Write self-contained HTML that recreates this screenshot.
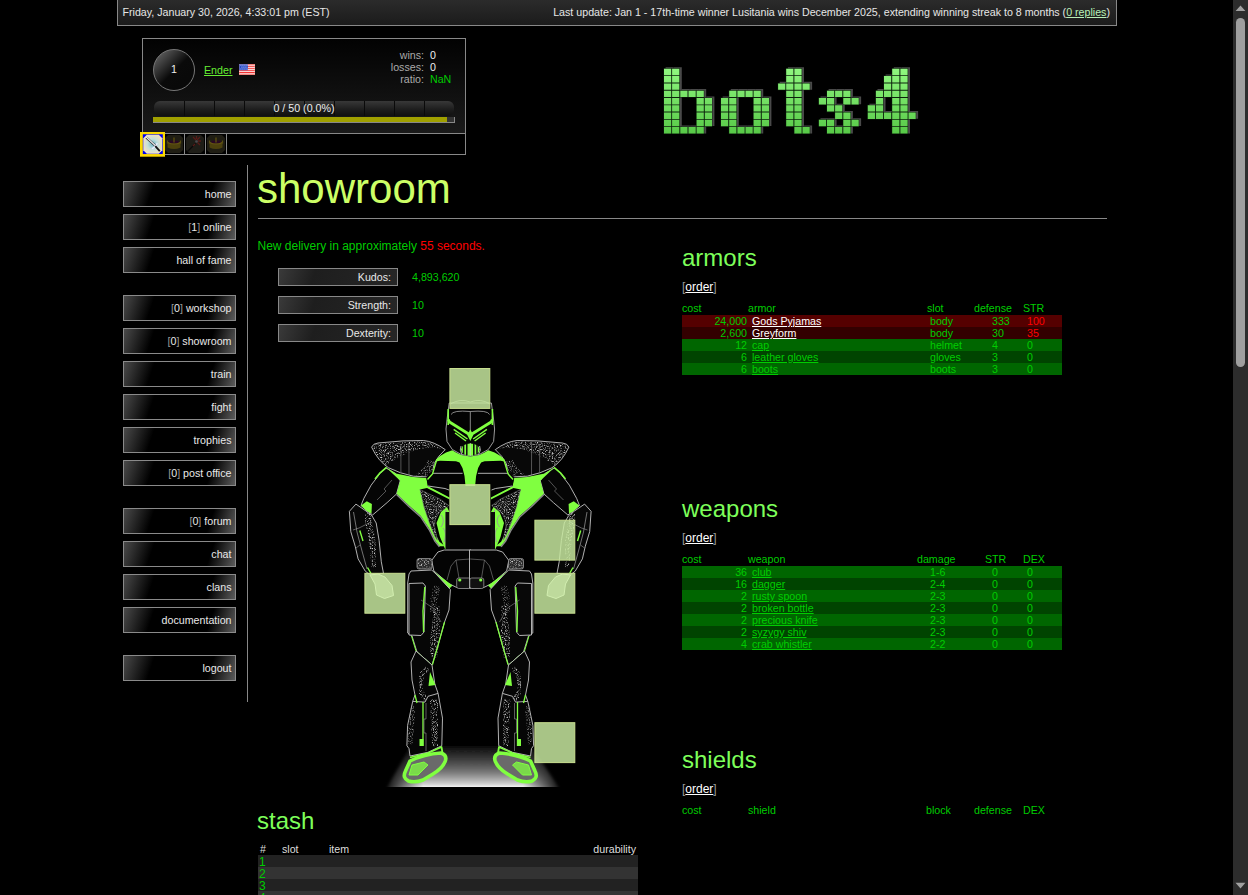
<!DOCTYPE html>
<html lang="en">
<head>
<meta charset="utf-8">
<title>bots4 - showroom</title>
<style>
html,body{margin:0;padding:0;background:#000;}
body{width:1248px;height:895px;overflow:hidden;position:relative;font-family:"Liberation Sans",sans-serif;font-size:12px;color:#ddd;}
a{color:inherit;}
.abs{position:absolute;}
/* top bar */
#topbar{position:absolute;left:117px;top:-1px;width:998px;height:25px;border:1px solid #888;background:linear-gradient(#2b2b2b,#1b1b1b);line-height:25px;font-size:8pt;color:#e6e6e6;}
#topbar .l{position:absolute;left:4.5px;top:0;}
#topbar .rt{position:absolute;right:6px;top:0;}
#topbar a{color:#b8f0b8;text-decoration:underline;}
/* player card */
#card{position:absolute;left:142px;top:38px;width:322px;height:115px;border:1px solid #888;background:#000;}
#card .top{position:absolute;left:0;top:0;width:322px;height:94px;background:linear-gradient(#020202,#1a1a1a);border-bottom:1px solid #888;}
#lvl{position:absolute;left:10px;top:10px;width:40px;height:40px;border:1px solid #777;border-radius:50%;background:linear-gradient(135deg,#707070 0%,#3a3a3a 28%,#0a0a0a 52%,#080808 100%);text-align:center;line-height:38px;font-size:8pt;color:#eee;}
#pname{position:absolute;left:61px;top:25px;font-size:8pt;color:#6e3;text-decoration:underline;}
#flag{position:absolute;left:96px;top:25px;width:16px;height:11px;}
.stat{position:absolute;font-size:8pt;line-height:12px;color:#aaa;}
#xp{position:absolute;left:11px;top:62px;width:300px;height:15px;border-radius:6px;background:linear-gradient(#383838,#1c1c1c 60%,#101010);overflow:hidden;}
#xp i{position:absolute;top:0;width:1px;height:15px;background:#0a0a0a;}
#xp span{position:absolute;left:0;top:0;width:300px;text-align:center;font-size:8pt;line-height:15px;color:#eee;}
#hp{position:absolute;left:10px;top:78px;width:301px;height:5px;background:#333;border-right:1px solid #888;border-bottom:1px solid #888;}
#hp b{display:block;width:294px;height:5px;background:#a0a000;}
.ic{position:absolute;top:95px;width:20px;height:20px;border-right:1px solid #888;background:#000;}
.ic svg{display:block;}
.ic.dim svg{opacity:.55;}
/* menu */
.mb{position:absolute;left:123px;width:107.5px;height:24px;border:1px solid #8a8a8a;padding-right:3.5px;text-align:right;font-size:8pt;line-height:24px;color:#e8e8e8;background:linear-gradient(108deg,#4a4a4a 0%,#000 26%,#000 76%,#5c5c5c 100%);}
.mb s{text-decoration:none;color:#999;}
#vline{position:absolute;left:247px;top:165px;width:1px;height:537px;background:#888;}
h1{position:absolute;left:257px;top:165px;margin:0;font-size:42px;line-height:48px;font-weight:normal;color:#ccff66;}
#hr{position:absolute;left:258px;top:218px;width:849px;height:1px;background:#888;}
h2{position:absolute;margin:0;font-size:24px;line-height:28px;font-weight:normal;color:#7dff5a;}
.g{color:#0c0;}
.r{color:#f00;}
.sb{position:absolute;left:278px;width:112px;height:16px;border:1px solid #888;padding-right:6px;text-align:right;font-size:8pt;line-height:16px;color:#e8e8e8;background:linear-gradient(108deg,#3a3a3a 0%,#1e1e1e 30%,#262626 100%);}
.sv{position:absolute;left:412px;font-size:8pt;line-height:18px;color:#0c0;}
/* tables */
.tb{position:absolute;left:682px;width:380px;font-size:8pt;line-height:12px;color:#0c0;}
.tr{position:relative;height:12px;width:380px;}
.tr span,.tr a{position:absolute;top:0;white-space:nowrap;}
.c1{right:315px;}
.hd span{top:-1px !important;}
.ord{position:absolute;left:682px;font-size:12px;line-height:14px;color:#999;}
.ord a{color:#fff;}
#scroll{position:absolute;left:1233px;top:0;width:15px;height:895px;background:#2c2c2c;}
#scroll .th{position:absolute;left:3px;top:18px;width:9px;height:349px;border-radius:4.5px;background:#9f9f9f;}
#scroll svg{position:absolute;left:0;top:0;}
</style>
</head>
<body>
<div id="topbar"><span class="l">Friday, January 30, 2026, 4:33:01 pm (EST)</span><span class="rt">Last update: Jan 1 - 17th-time winner Lusitania wins December 2025, extending winning streak to 8 months (<a>0 replies</a>)</span></div>

<!--LOGO-->
<svg id="logo" class="abs" style="left:655px;top:60px" width="275" height="85" viewBox="655 60 275 85" role="img" aria-label="bots4">
<defs><linearGradient id="lg" gradientUnits="userSpaceOnUse" x1="0" y1="68" x2="0" y2="135"><stop offset="0" stop-color="#90f780"/><stop offset="1" stop-color="#56c846"/></linearGradient><filter id="lb" x="-5%" y="-10%" width="110%" height="120%"><feGaussianBlur stdDeviation="0.5"/></filter></defs>
<path d="M665.6 67.2h8.0v7.9h-8.0zM673.8 67.2h8.0v7.9h-8.0zM665.6 74.5h8.0v7.9h-8.0zM673.8 74.5h8.0v7.9h-8.0zM665.6 81.8h8.0v7.9h-8.0zM673.8 81.8h8.0v7.9h-8.0zM665.6 89.1h8.0v7.9h-8.0zM673.8 89.1h8.0v7.9h-8.0zM681.9 89.1h8.0v7.9h-8.0zM690.1 89.1h8.0v7.9h-8.0zM698.2 89.1h8.0v7.9h-8.0zM665.6 96.4h8.0v7.9h-8.0zM673.8 96.4h8.0v7.9h-8.0zM698.2 96.4h8.0v7.9h-8.0zM706.4 96.4h8.0v7.9h-8.0zM665.6 103.7h8.0v7.9h-8.0zM673.8 103.7h8.0v7.9h-8.0zM698.2 103.7h8.0v7.9h-8.0zM706.4 103.7h8.0v7.9h-8.0zM665.6 110.9h8.0v7.9h-8.0zM673.8 110.9h8.0v7.9h-8.0zM698.2 110.9h8.0v7.9h-8.0zM706.4 110.9h8.0v7.9h-8.0zM665.6 118.2h8.0v7.9h-8.0zM673.8 118.2h8.0v7.9h-8.0zM698.2 118.2h8.0v7.9h-8.0zM706.4 118.2h8.0v7.9h-8.0zM665.6 125.5h8.0v7.9h-8.0zM673.8 125.5h8.0v7.9h-8.0zM681.9 125.5h8.0v7.9h-8.0zM690.1 125.5h8.0v7.9h-8.0zM698.2 125.5h8.0v7.9h-8.0zM730.8 89.1h8.0v7.9h-8.0zM739.0 89.1h8.0v7.9h-8.0zM747.1 89.1h8.0v7.9h-8.0zM755.2 89.1h8.0v7.9h-8.0zM722.6 96.4h8.0v7.9h-8.0zM730.8 96.4h8.0v7.9h-8.0zM755.2 96.4h8.0v7.9h-8.0zM763.4 96.4h8.0v7.9h-8.0zM722.6 103.7h8.0v7.9h-8.0zM730.8 103.7h8.0v7.9h-8.0zM755.2 103.7h8.0v7.9h-8.0zM763.4 103.7h8.0v7.9h-8.0zM722.6 110.9h8.0v7.9h-8.0zM730.8 110.9h8.0v7.9h-8.0zM755.2 110.9h8.0v7.9h-8.0zM763.4 110.9h8.0v7.9h-8.0zM722.6 118.2h8.0v7.9h-8.0zM730.8 118.2h8.0v7.9h-8.0zM755.2 118.2h8.0v7.9h-8.0zM763.4 118.2h8.0v7.9h-8.0zM730.8 125.5h8.0v7.9h-8.0zM739.0 125.5h8.0v7.9h-8.0zM747.1 125.5h8.0v7.9h-8.0zM755.2 125.5h8.0v7.9h-8.0zM787.9 67.2h8.0v7.9h-8.0zM796.0 67.2h8.0v7.9h-8.0zM787.9 74.5h8.0v7.9h-8.0zM796.0 74.5h8.0v7.9h-8.0zM779.7 81.8h8.0v7.9h-8.0zM787.9 81.8h8.0v7.9h-8.0zM796.0 81.8h8.0v7.9h-8.0zM804.1 81.8h8.0v7.9h-8.0zM787.9 89.1h8.0v7.9h-8.0zM796.0 89.1h8.0v7.9h-8.0zM787.9 96.4h8.0v7.9h-8.0zM796.0 96.4h8.0v7.9h-8.0zM787.9 103.7h8.0v7.9h-8.0zM796.0 103.7h8.0v7.9h-8.0zM787.9 110.9h8.0v7.9h-8.0zM796.0 110.9h8.0v7.9h-8.0zM787.9 118.2h8.0v7.9h-8.0zM796.0 118.2h8.0v7.9h-8.0zM796.0 125.5h8.0v7.9h-8.0zM804.1 125.5h8.0v7.9h-8.0zM828.6 89.1h8.0v7.9h-8.0zM836.8 89.1h8.0v7.9h-8.0zM844.9 89.1h8.0v7.9h-8.0zM820.5 96.4h8.0v7.9h-8.0zM828.6 96.4h8.0v7.9h-8.0zM844.9 96.4h8.0v7.9h-8.0zM853.1 96.4h8.0v7.9h-8.0zM828.6 103.7h8.0v7.9h-8.0zM836.8 103.7h8.0v7.9h-8.0zM836.8 110.9h8.0v7.9h-8.0zM844.9 110.9h8.0v7.9h-8.0zM820.5 118.2h8.0v7.9h-8.0zM828.6 118.2h8.0v7.9h-8.0zM844.9 118.2h8.0v7.9h-8.0zM853.1 118.2h8.0v7.9h-8.0zM828.6 125.5h8.0v7.9h-8.0zM836.8 125.5h8.0v7.9h-8.0zM844.9 125.5h8.0v7.9h-8.0zM893.8 67.2h8.0v7.9h-8.0zM902.0 67.2h8.0v7.9h-8.0zM885.6 74.5h8.0v7.9h-8.0zM893.8 74.5h8.0v7.9h-8.0zM902.0 74.5h8.0v7.9h-8.0zM885.6 81.8h8.0v7.9h-8.0zM893.8 81.8h8.0v7.9h-8.0zM902.0 81.8h8.0v7.9h-8.0zM877.5 89.1h8.0v7.9h-8.0zM885.6 89.1h8.0v7.9h-8.0zM893.8 89.1h8.0v7.9h-8.0zM902.0 89.1h8.0v7.9h-8.0zM877.5 96.4h8.0v7.9h-8.0zM893.8 96.4h8.0v7.9h-8.0zM902.0 96.4h8.0v7.9h-8.0zM869.4 103.7h8.0v7.9h-8.0zM877.5 103.7h8.0v7.9h-8.0zM893.8 103.7h8.0v7.9h-8.0zM902.0 103.7h8.0v7.9h-8.0zM869.4 110.9h8.0v7.9h-8.0zM877.5 110.9h8.0v7.9h-8.0zM885.6 110.9h8.0v7.9h-8.0zM893.8 110.9h8.0v7.9h-8.0zM902.0 110.9h8.0v7.9h-8.0zM910.1 110.9h8.0v7.9h-8.0zM893.8 118.2h8.0v7.9h-8.0zM902.0 118.2h8.0v7.9h-8.0zM893.8 125.5h8.0v7.9h-8.0zM902.0 125.5h8.0v7.9h-8.0z" fill="#4a4a4a" filter="url(#lb)"/>
<path d="M663.5 68.3h8.2v7.4h-8.2zM671.6 68.3h8.2v7.4h-8.2zM663.5 75.6h8.2v7.4h-8.2zM671.6 75.6h8.2v7.4h-8.2zM663.5 82.9h8.2v7.4h-8.2zM671.6 82.9h8.2v7.4h-8.2zM663.5 90.2h8.2v7.4h-8.2zM671.6 90.2h8.2v7.4h-8.2zM679.8 90.2h8.2v7.4h-8.2zM688.0 90.2h8.2v7.4h-8.2zM696.1 90.2h8.2v7.4h-8.2zM663.5 97.5h8.2v7.4h-8.2zM671.6 97.5h8.2v7.4h-8.2zM696.1 97.5h8.2v7.4h-8.2zM704.2 97.5h8.2v7.4h-8.2zM663.5 104.8h8.2v7.4h-8.2zM671.6 104.8h8.2v7.4h-8.2zM696.1 104.8h8.2v7.4h-8.2zM704.2 104.8h8.2v7.4h-8.2zM663.5 112.0h8.2v7.4h-8.2zM671.6 112.0h8.2v7.4h-8.2zM696.1 112.0h8.2v7.4h-8.2zM704.2 112.0h8.2v7.4h-8.2zM663.5 119.3h8.2v7.4h-8.2zM671.6 119.3h8.2v7.4h-8.2zM696.1 119.3h8.2v7.4h-8.2zM704.2 119.3h8.2v7.4h-8.2zM663.5 126.6h8.2v7.4h-8.2zM671.6 126.6h8.2v7.4h-8.2zM679.8 126.6h8.2v7.4h-8.2zM688.0 126.6h8.2v7.4h-8.2zM696.1 126.6h8.2v7.4h-8.2zM728.7 90.2h8.2v7.4h-8.2zM736.9 90.2h8.2v7.4h-8.2zM745.0 90.2h8.2v7.4h-8.2zM753.1 90.2h8.2v7.4h-8.2zM720.5 97.5h8.2v7.4h-8.2zM728.7 97.5h8.2v7.4h-8.2zM753.1 97.5h8.2v7.4h-8.2zM761.3 97.5h8.2v7.4h-8.2zM720.5 104.8h8.2v7.4h-8.2zM728.7 104.8h8.2v7.4h-8.2zM753.1 104.8h8.2v7.4h-8.2zM761.3 104.8h8.2v7.4h-8.2zM720.5 112.0h8.2v7.4h-8.2zM728.7 112.0h8.2v7.4h-8.2zM753.1 112.0h8.2v7.4h-8.2zM761.3 112.0h8.2v7.4h-8.2zM720.5 119.3h8.2v7.4h-8.2zM728.7 119.3h8.2v7.4h-8.2zM753.1 119.3h8.2v7.4h-8.2zM761.3 119.3h8.2v7.4h-8.2zM728.7 126.6h8.2v7.4h-8.2zM736.9 126.6h8.2v7.4h-8.2zM745.0 126.6h8.2v7.4h-8.2zM753.1 126.6h8.2v7.4h-8.2zM785.8 68.3h8.2v7.4h-8.2zM793.9 68.3h8.2v7.4h-8.2zM785.8 75.6h8.2v7.4h-8.2zM793.9 75.6h8.2v7.4h-8.2zM777.6 82.9h8.2v7.4h-8.2zM785.8 82.9h8.2v7.4h-8.2zM793.9 82.9h8.2v7.4h-8.2zM802.0 82.9h8.2v7.4h-8.2zM785.8 90.2h8.2v7.4h-8.2zM793.9 90.2h8.2v7.4h-8.2zM785.8 97.5h8.2v7.4h-8.2zM793.9 97.5h8.2v7.4h-8.2zM785.8 104.8h8.2v7.4h-8.2zM793.9 104.8h8.2v7.4h-8.2zM785.8 112.0h8.2v7.4h-8.2zM793.9 112.0h8.2v7.4h-8.2zM785.8 119.3h8.2v7.4h-8.2zM793.9 119.3h8.2v7.4h-8.2zM793.9 126.6h8.2v7.4h-8.2zM802.0 126.6h8.2v7.4h-8.2zM826.5 90.2h8.2v7.4h-8.2zM834.6 90.2h8.2v7.4h-8.2zM842.8 90.2h8.2v7.4h-8.2zM818.4 97.5h8.2v7.4h-8.2zM826.5 97.5h8.2v7.4h-8.2zM842.8 97.5h8.2v7.4h-8.2zM851.0 97.5h8.2v7.4h-8.2zM826.5 104.8h8.2v7.4h-8.2zM834.6 104.8h8.2v7.4h-8.2zM834.6 112.0h8.2v7.4h-8.2zM842.8 112.0h8.2v7.4h-8.2zM818.4 119.3h8.2v7.4h-8.2zM826.5 119.3h8.2v7.4h-8.2zM842.8 119.3h8.2v7.4h-8.2zM851.0 119.3h8.2v7.4h-8.2zM826.5 126.6h8.2v7.4h-8.2zM834.6 126.6h8.2v7.4h-8.2zM842.8 126.6h8.2v7.4h-8.2zM891.7 68.3h8.2v7.4h-8.2zM899.9 68.3h8.2v7.4h-8.2zM883.5 75.6h8.2v7.4h-8.2zM891.7 75.6h8.2v7.4h-8.2zM899.9 75.6h8.2v7.4h-8.2zM883.5 82.9h8.2v7.4h-8.2zM891.7 82.9h8.2v7.4h-8.2zM899.9 82.9h8.2v7.4h-8.2zM875.4 90.2h8.2v7.4h-8.2zM883.5 90.2h8.2v7.4h-8.2zM891.7 90.2h8.2v7.4h-8.2zM899.9 90.2h8.2v7.4h-8.2zM875.4 97.5h8.2v7.4h-8.2zM891.7 97.5h8.2v7.4h-8.2zM899.9 97.5h8.2v7.4h-8.2zM867.2 104.8h8.2v7.4h-8.2zM875.4 104.8h8.2v7.4h-8.2zM891.7 104.8h8.2v7.4h-8.2zM899.9 104.8h8.2v7.4h-8.2zM867.2 112.0h8.2v7.4h-8.2zM875.4 112.0h8.2v7.4h-8.2zM883.5 112.0h8.2v7.4h-8.2zM891.7 112.0h8.2v7.4h-8.2zM899.9 112.0h8.2v7.4h-8.2zM908.0 112.0h8.2v7.4h-8.2zM891.7 119.3h8.2v7.4h-8.2zM899.9 119.3h8.2v7.4h-8.2zM891.7 126.6h8.2v7.4h-8.2zM899.9 126.6h8.2v7.4h-8.2z" fill="#0c220c"/>
<path d="M664.0 68.8h7.2v6.4h-7.2zM672.1 68.8h7.2v6.4h-7.2zM664.0 76.1h7.2v6.4h-7.2zM672.1 76.1h7.2v6.4h-7.2zM664.0 83.4h7.2v6.4h-7.2zM672.1 83.4h7.2v6.4h-7.2zM664.0 90.7h7.2v6.4h-7.2zM672.1 90.7h7.2v6.4h-7.2zM680.3 90.7h7.2v6.4h-7.2zM688.5 90.7h7.2v6.4h-7.2zM696.6 90.7h7.2v6.4h-7.2zM664.0 98.0h7.2v6.4h-7.2zM672.1 98.0h7.2v6.4h-7.2zM696.6 98.0h7.2v6.4h-7.2zM704.8 98.0h7.2v6.4h-7.2zM664.0 105.2h7.2v6.4h-7.2zM672.1 105.2h7.2v6.4h-7.2zM696.6 105.2h7.2v6.4h-7.2zM704.8 105.2h7.2v6.4h-7.2zM664.0 112.5h7.2v6.4h-7.2zM672.1 112.5h7.2v6.4h-7.2zM696.6 112.5h7.2v6.4h-7.2zM704.8 112.5h7.2v6.4h-7.2zM664.0 119.8h7.2v6.4h-7.2zM672.1 119.8h7.2v6.4h-7.2zM696.6 119.8h7.2v6.4h-7.2zM704.8 119.8h7.2v6.4h-7.2zM664.0 127.1h7.2v6.4h-7.2zM672.1 127.1h7.2v6.4h-7.2zM680.3 127.1h7.2v6.4h-7.2zM688.5 127.1h7.2v6.4h-7.2zM696.6 127.1h7.2v6.4h-7.2zM729.2 90.7h7.2v6.4h-7.2zM737.4 90.7h7.2v6.4h-7.2zM745.5 90.7h7.2v6.4h-7.2zM753.6 90.7h7.2v6.4h-7.2zM721.0 98.0h7.2v6.4h-7.2zM729.2 98.0h7.2v6.4h-7.2zM753.6 98.0h7.2v6.4h-7.2zM761.8 98.0h7.2v6.4h-7.2zM721.0 105.2h7.2v6.4h-7.2zM729.2 105.2h7.2v6.4h-7.2zM753.6 105.2h7.2v6.4h-7.2zM761.8 105.2h7.2v6.4h-7.2zM721.0 112.5h7.2v6.4h-7.2zM729.2 112.5h7.2v6.4h-7.2zM753.6 112.5h7.2v6.4h-7.2zM761.8 112.5h7.2v6.4h-7.2zM721.0 119.8h7.2v6.4h-7.2zM729.2 119.8h7.2v6.4h-7.2zM753.6 119.8h7.2v6.4h-7.2zM761.8 119.8h7.2v6.4h-7.2zM729.2 127.1h7.2v6.4h-7.2zM737.4 127.1h7.2v6.4h-7.2zM745.5 127.1h7.2v6.4h-7.2zM753.6 127.1h7.2v6.4h-7.2zM786.2 68.8h7.2v6.4h-7.2zM794.4 68.8h7.2v6.4h-7.2zM786.2 76.1h7.2v6.4h-7.2zM794.4 76.1h7.2v6.4h-7.2zM778.1 83.4h7.2v6.4h-7.2zM786.2 83.4h7.2v6.4h-7.2zM794.4 83.4h7.2v6.4h-7.2zM802.5 83.4h7.2v6.4h-7.2zM786.2 90.7h7.2v6.4h-7.2zM794.4 90.7h7.2v6.4h-7.2zM786.2 98.0h7.2v6.4h-7.2zM794.4 98.0h7.2v6.4h-7.2zM786.2 105.2h7.2v6.4h-7.2zM794.4 105.2h7.2v6.4h-7.2zM786.2 112.5h7.2v6.4h-7.2zM794.4 112.5h7.2v6.4h-7.2zM786.2 119.8h7.2v6.4h-7.2zM794.4 119.8h7.2v6.4h-7.2zM794.4 127.1h7.2v6.4h-7.2zM802.5 127.1h7.2v6.4h-7.2zM827.0 90.7h7.2v6.4h-7.2zM835.1 90.7h7.2v6.4h-7.2zM843.3 90.7h7.2v6.4h-7.2zM818.9 98.0h7.2v6.4h-7.2zM827.0 98.0h7.2v6.4h-7.2zM843.3 98.0h7.2v6.4h-7.2zM851.5 98.0h7.2v6.4h-7.2zM827.0 105.2h7.2v6.4h-7.2zM835.1 105.2h7.2v6.4h-7.2zM835.1 112.5h7.2v6.4h-7.2zM843.3 112.5h7.2v6.4h-7.2zM818.9 119.8h7.2v6.4h-7.2zM827.0 119.8h7.2v6.4h-7.2zM843.3 119.8h7.2v6.4h-7.2zM851.5 119.8h7.2v6.4h-7.2zM827.0 127.1h7.2v6.4h-7.2zM835.1 127.1h7.2v6.4h-7.2zM843.3 127.1h7.2v6.4h-7.2zM892.2 68.8h7.2v6.4h-7.2zM900.4 68.8h7.2v6.4h-7.2zM884.0 76.1h7.2v6.4h-7.2zM892.2 76.1h7.2v6.4h-7.2zM900.4 76.1h7.2v6.4h-7.2zM884.0 83.4h7.2v6.4h-7.2zM892.2 83.4h7.2v6.4h-7.2zM900.4 83.4h7.2v6.4h-7.2zM875.9 90.7h7.2v6.4h-7.2zM884.0 90.7h7.2v6.4h-7.2zM892.2 90.7h7.2v6.4h-7.2zM900.4 90.7h7.2v6.4h-7.2zM875.9 98.0h7.2v6.4h-7.2zM892.2 98.0h7.2v6.4h-7.2zM900.4 98.0h7.2v6.4h-7.2zM867.8 105.2h7.2v6.4h-7.2zM875.9 105.2h7.2v6.4h-7.2zM892.2 105.2h7.2v6.4h-7.2zM900.4 105.2h7.2v6.4h-7.2zM867.8 112.5h7.2v6.4h-7.2zM875.9 112.5h7.2v6.4h-7.2zM884.0 112.5h7.2v6.4h-7.2zM892.2 112.5h7.2v6.4h-7.2zM900.4 112.5h7.2v6.4h-7.2zM908.5 112.5h7.2v6.4h-7.2zM892.2 119.8h7.2v6.4h-7.2zM900.4 119.8h7.2v6.4h-7.2zM892.2 127.1h7.2v6.4h-7.2zM900.4 127.1h7.2v6.4h-7.2z" fill="url(#lg)"/>
</svg>
<!--/LOGO-->
<div id="card">
 <div class="top">
  <div id="lvl">1</div>
  <a id="pname">Ender</a><svg id="flag" viewBox="0 0 16 11"><rect width="16" height="11" fill="#fbfbfb"/><path d="M0 .800h16M0 2.700h16M0 4.700h16M0 6.700h16M0 8.500h16M0 10.200h16" stroke="#f21c1c" stroke-width=".9"/><rect width="8.800" height="6.200" fill="#2448c8"/><path d="M1.500 1.200h7M2.500 3.100h6M1.500 5h7" stroke="#fff" stroke-width=".9" stroke-dasharray=".9 1.100"/><rect x=".25" y=".25" width="15.500" height="10.500" fill="none" stroke="#e8b0a0" stroke-opacity=".6" stroke-width=".5"/></svg>
  <div class="stat" style="right:41px;top:10px;text-align:right;">wins:<br>losses:<br>ratio:</div>
  <div class="stat" style="left:287px;top:10px;color:#eee;">0<br>0<br><span style="color:#0c0">NaN</span></div>
  <div id="xp"><i style="left:30px"></i><i style="left:60px"></i><i style="left:90px"></i><i style="left:120px"></i><i style="left:150px"></i><i style="left:180px"></i><i style="left:210px"></i><i style="left:240px"></i><i style="left:270px"></i><span>0 / 50 (0.0%)</span></div>
  <div id="hp"><b></b></div>
 </div>
 <svg class="abs" style="left:-3px;top:93px;z-index:2" width="25" height="25" viewBox="0 0 25 25"><rect width="25" height="24.700" fill="#fbd900"/><rect x="2.800" y="2.250" width="20" height="19.800" fill="#0000f2"/><g transform="translate(2.800 2.150)"><defs><radialGradient id="sw"><stop offset="0" stop-color="#6fb6c8"/><stop offset="0.55" stop-color="#c4e0dc"/><stop offset="1" stop-color="#ece0c8"/></radialGradient></defs><path d="M4 .500h12l3.500 3.500v12l-3.500 3.500H4l-3.500-3.500V4z" fill="url(#sw)"/><path d="M3.500 3.500L13 12" stroke="#333" stroke-width="2.200"/><path d="M3.500 3L12.500 11.500" stroke="#fff" stroke-width="1.100"/><path d="M9 14.500q3.500-1 5.500-5.500" fill="none" stroke="#eef" stroke-width="1.400"/><path d="M12.500 12L17 17" stroke="#111" stroke-width="1.800"/></g></svg>
 <div class="ic dim" style="left:21px"><svg width="20" height="20" viewBox="0 0 20 20"><path d="M4 1h12l3 3v12l-3 3H4l-3-3V4z" fill="#3a3623"/><path d="M3.5 8.5q6.500-2.500 13 0v5q-6.500 3-13 0z" fill="#8a7718"/><path d="M3.500 8.500q6.500 3 13 0" fill="none" stroke="#b39a22" stroke-width="1.200"/><ellipse cx="10" cy="7.800" rx="5" ry="1.500" fill="#4a1040"/><path d="M9.300 3.500h1.400v5h-1.400z" fill="#a08a1c"/><path d="M3.500 6.500v3M16.500 6.500v3" stroke="#a08a1c" stroke-width="1.200"/></svg></div><div class="ic dim" style="left:42px"><svg width="20" height="20" viewBox="0 0 20 20"><path d="M4 1h12l3 3v12l-3 3H4l-3-3V4z" fill="#38352a"/><path d="M2 18L10.500 9.500" stroke="#111" stroke-width="1.300"/><path d="M8 3l3 3M15 3l-3 3M8 12l2-2M15 11l-2.500-2.500M11.500 2v3M16 7h-3" stroke="#a0302a" stroke-width="1.300"/><circle cx="11.500" cy="7.500" r="1.300" fill="#8a8a90"/></svg></div><div class="ic dim" style="left:63px"><svg width="20" height="20" viewBox="0 0 20 20"><path d="M4 1h12l3 3v12l-3 3H4l-3-3V4z" fill="#3a3623"/><path d="M3.5 8.5q6.500-2.500 13 0v5q-6.500 3-13 0z" fill="#8a7718"/><path d="M3.500 8.500q6.500 3 13 0" fill="none" stroke="#b39a22" stroke-width="1.200"/><ellipse cx="10" cy="7.800" rx="5" ry="1.500" fill="#4a1040"/><path d="M9.300 3.500h1.400v5h-1.400z" fill="#a08a1c"/><path d="M3.500 6.500v3M16.500 6.500v3" stroke="#a08a1c" stroke-width="1.200"/></svg></div>
</div>

<div class="mb" style="top:181px">home</div>
<div class="mb" style="top:214px"><s>[</s>1<s>]</s> online</div>
<div class="mb" style="top:247px">hall of fame</div>
<div class="mb" style="top:295px"><s>[</s>0<s>]</s> workshop</div>
<div class="mb" style="top:328px"><s>[</s>0<s>]</s> showroom</div>
<div class="mb" style="top:361px">train</div>
<div class="mb" style="top:394px">fight</div>
<div class="mb" style="top:427px">trophies</div>
<div class="mb" style="top:460px"><s>[</s>0<s>]</s> post office</div>
<div class="mb" style="top:508px"><s>[</s>0<s>]</s> forum</div>
<div class="mb" style="top:541px">chat</div>
<div class="mb" style="top:574px">clans</div>
<div class="mb" style="top:607px">documentation</div>
<div class="mb" style="top:655px">logout</div>
<div id="vline"></div>

<h1>showroom</h1>
<div id="hr"></div>
<div class="abs g" style="left:257.5px;top:239px;line-height:14px;">New delivery in approximately <span class="r">55 seconds.</span></div>

<div class="sb" style="top:268px">Kudos:</div><div class="sv" style="top:268px">4,893,620</div>
<div class="sb" style="top:296px">Strength:</div><div class="sv" style="top:296px">10</div>
<div class="sb" style="top:324px">Dexterity:</div><div class="sv" style="top:324px">10</div>

<!--ROBOT-->
<svg id="robot" class="abs" style="left:340px;top:360px" width="260" height="430" viewBox="340 360 260 430">
<defs>
<linearGradient id="glow" gradientUnits="userSpaceOnUse" x1="0" y1="788" x2="0" y2="744"><stop offset="0.02" stop-color="#fff"/><stop offset="0.05" stop-color="#ddd"/><stop offset="0.136" stop-color="#c0c0c0"/><stop offset="0.25" stop-color="#999"/><stop offset="0.364" stop-color="#777"/><stop offset="0.523" stop-color="#555"/><stop offset="0.705" stop-color="#333"/><stop offset="0.864" stop-color="#1a1a1a"/><stop offset="0.98" stop-color="#000"/></linearGradient>
<linearGradient id="glowm" gradientUnits="userSpaceOnUse" x1="384" y1="0" x2="562" y2="0"><stop offset="0" stop-color="#000"/><stop offset="0.22" stop-color="#000" stop-opacity="0"/><stop offset="0.78" stop-color="#000" stop-opacity="0"/><stop offset="1" stop-color="#000"/></linearGradient>
<filter id="gb" x="-10%" y="-20%" width="120%" height="140%"><feGaussianBlur stdDeviation="1.6"/></filter>
<linearGradient id="pad" x1="0" y1="0" x2="1" y2="1"><stop offset="0" stop-color="#3a3a3a"/><stop offset="0.5" stop-color="#161616"/><stop offset="1" stop-color="#050505"/></linearGradient>
<filter id="nz" x="-5%" y="-5%" width="110%" height="110%"><feTurbulence type="fractalNoise" baseFrequency="0.75" numOctaves="2" seed="11"/><feColorMatrix type="matrix" values="0 0 0 0 .62  0 0 0 0 .62  0 0 0 0 .62  3 0 0 0 -1.42"/><feComposite in2="SourceGraphic" operator="in"/></filter>
<clipPath id="rc"><rect x="340" y="360" width="260" height="427"/></clipPath>
<g id="half" stroke-linejoin="round">
 <!-- upper arm -->
 <path d="M385.7 467.8L395.8 473.6L400.2 480.8L396.6 493.9L387.1 502.6L372.6 515L361 505.5L363.9 498.3L371.1 485.2L379.9 473.6Z" fill="#050505" stroke="#c4c4c4" stroke-width=".9"/>
 <path d="M386.500 467.300L379.500 473.400L375 479" fill="none" stroke="#80ff40" stroke-width="1.600"/>
 <path d="M361 505.5L366.8 501.2L371.9 504.1L371.5 513.5L366.8 511.3Z" fill="#80ff40"/>
 <path d="M392 480l-8 9l2 2l-9 9" fill="none" stroke="#888" stroke-width=".6"/>
 <!-- forearm -->
 <path d="M355.9 504.1L349.4 511.3L350.8 531.7L355.2 546.2L358.1 558.9L365.3 571.2L369 574L383.5 573.4L381.3 561.8L379.1 540.4L376.2 523L371.9 515.7L366 511Z" fill="#070707" stroke="#c4c4c4" stroke-width=".9"/>
 <path d="M353 530l6 -2l12 -6M356 548l4-3" fill="none" stroke="#999" stroke-width=".6"/>
 <path d="M367.500 567.500L371 573.500M359.800 530.500L363 541" stroke="#80ff40" stroke-width="1.400" fill="none"/><path d="M353.500 512l3.500 20l5 19l5 18" stroke="#bbb" stroke-width=".6" fill="none"/>
 <path d="M366 513l4 14l3 20l2 20" stroke="#fff" stroke-width="7" fill="none" filter="url(#nz)"/>
 <!-- hand -->
 <path d="M370 575l5 9l1.500 11l8 3.500l9-3l-1.500-10l-7-8.500l-7-3z" fill="#8a8a8a" stroke="#fff" stroke-width="1"/>
 <!-- wing green -->
 <path d="M385.7 467L395.8 473.6L413.3 477L426.3 478L427.8 486L449.6 497.5L449.6 499.5L427 488L419.8 489.5L424.2 502.6L428.5 517.1L433.6 530.2L439.4 541.8L445.2 546.2L439.4 546.2L435 540.4L429.2 528.8L420.5 515.7L408.9 505.5L396.6 493.9L400.2 480.8L393 474Z" fill="#80ff40"/>
 <path d="M396.6 494.5L408.9 506.5L420.5 516.7L429.2 529.8L435 541.4L439.4 546.8" fill="none" stroke="#8a8a8a" stroke-width="1.4"/>
 <!-- wedge -->
 <path d="M420 489.500L428 493.400L440 499L448.800 505.500L446 508L439.500 512L435.500 519L434.500 526L437.400 540.300L434.700 536L429.400 523L424 507Z" fill="#101010" stroke="#777" stroke-width=".5"/>
 <path d="M420 489.500L428 493.400L440 499L448.800 505.500L446 508L439.500 512L435.500 519L434.500 526L437.400 540.300L434.700 536L429.400 523L424 507Z" fill="#fff" filter="url(#nz)"/>
 <!-- abdomen side green + pipes -->
 <path d="M441 512L447 507L449.5 512L449.5 549L445 549L440 537L436.5 523Z" fill="#80ff40"/>
 <path d="M441 515c3 3 3 8 0 12M443 528c3 3 3 9 1 14M446 510v36" fill="none" stroke="#999" stroke-width="1"/>
 <rect x="445.5" y="512" width="4.5" height="38" fill="#0a0a0a"/>
 <!-- shoulder pad -->
 <path d="M371.600 447.100Q373 443.500 378 443L403 440.900L423.400 440.500Q434 441.500 445.200 449.600Q438 456 434.300 463.400Q433 470 432.100 471.400Q430 476 426.300 476.800L413.300 476.200Q400 473.500 388.600 467.800Q378 461 371.600 447.100Z" fill="#080808" stroke="#c4c4c4" stroke-width=".9"/>
 <g filter="url(#nz)"><path d="M373 447Q374 444 378 444L403 442L423 441.500Q432 442.500 441 448.500Q425 446 410 452Q396 458 386 465Q377 458 373 447Z" fill="#fff"/><path d="M436 462Q434 470 426 476L414 475.500Q424 470 428 460Z" fill="#fff" fill-opacity=".7"/></g>
 <path d="M400.9 444.5L400.9 472M408.9 443L409 475" stroke="#888" stroke-width=".6" fill="none"/>
 <!-- pectoral -->
 <path d="M438 461.5L458.3 462.7L461.2 467.8L463.4 478L464.1 486L449 496L428 486L426.3 477L432.1 470.7Z" fill="#030303"/>
 <path d="M432 473.3H462.6M428 486L445 488.5L449 490" stroke="#c4c4c4" stroke-width=".9" fill="none"/>
 <!-- pelvis half -->
 <path d="M471 550L444.2 550L437.9 552L431.7 560.4L433.8 570.8L448.3 583.3L456.7 587.5L471 588Z" fill="#040404" stroke="#c4c4c4" stroke-width=".9"/>
 <path d="M433 571L452.500 585.500L447.500 590.500L440 581Z" fill="#80ff40"/>
 <path d="M470.3 559L456 560L451 566L447 580M456 560L459 578" stroke="#888" stroke-width=".6" fill="none"/>
 <rect x="456.7" y="578" width="14" height="10.5" rx="2" fill="#111" stroke="#aaa" stroke-width=".7"/>
 <circle cx="459.8" cy="580" r="1.6" fill="#80ff40"/>
 <!-- hip joint -->
 <rect x="417" y="558.5" width="15" height="10.5" rx="2" fill="#2a2a2a" stroke="#aaa" stroke-width=".7"/><rect x="417.500" y="559" width="14" height="9.500" fill="#fff" filter="url(#nz)"/>
 <!-- thigh -->
 <path d="M411 571L431.7 570L436 574L450.4 589.6L449 610L444.2 623L437.9 645.8L432 665L417 652L412 636L407.7 633L407.7 583L409 574Z" fill="#060606" stroke="#c4c4c4" stroke-width=".9"/>
 <g filter="url(#nz)"><path d="M439 606L432.500 657" stroke="#fff" stroke-width="9" fill="none"/><path d="M437 586L431 612" stroke="#fff" stroke-opacity=".6" stroke-width="7" fill="none"/></g>
 <path d="M409 583.5L423 583L425.4 586L424 632L421 635.5L409 635Z" fill="#080808" stroke="#c4c4c4" stroke-width=".9"/>
 <path d="M424.8 587L423 611L423.6 632" stroke="#80ff40" stroke-width="1.4" fill="none"/>
 <path d="M444.6 622L437.9 645.8L432.5 664.6" stroke="#80ff40" stroke-width="1.2" fill="none"/>
 <path d="M411.5 636L416 651L432 665" stroke="#80ff40" stroke-width="1" fill="none"/>
 <path d="M421 600L433 608L441 622" stroke="#888" stroke-width=".6" fill="none"/>
 <!-- knee & shin -->
 <path d="M416 651L411 662L412 680L415 695L412.7 701.4L407.6 725.4L406.9 745.7L409 748.6L410 756L428 752.3L441.8 745.7L442.5 718.1L438.1 693.4L434.8 684L432 665Z" fill="#060606" stroke="#c4c4c4" stroke-width=".9"/>
 <path d="M430 672L435.5 685L428.5 686Z" fill="#80ff40"/>
 <path d="M428 668L422 674L420 690L426 700" stroke="#fff" stroke-width="5" fill="none" filter="url(#nz)"/>
 <path d="M412.7 701.4L425 702.1L428 696.3L438.1 693.4" stroke="#c4c4c4" stroke-width=".9" fill="none"/>
 <path d="M415 695L417 703M423 702L423 746" stroke="#80ff40" stroke-width="1.3" fill="none"/>
 <path d="M419.5 739h4v7h-4z" fill="#80ff40"/>
 <path d="M426 703v16h-2v14h2v18" stroke="#999" stroke-width=".6" fill="none"/>
 <g filter="url(#nz)"><path d="M434 699L436 746" stroke="#fff" stroke-width="8" fill="none"/><path d="M413 706L410 744" stroke="#fff" stroke-opacity=".7" stroke-width="5" fill="none"/></g>
 <!-- foot -->
 <path d="M410 761Q424 754 441 753Q447 755 445.500 760.500Q443 768 433 774L423 780Q415 783 408.500 781Q402 778 405.500 771Z" fill="#6a6a6a" stroke="#80ff40" stroke-width="3.600" stroke-linejoin="round"/>
 <path d="M412 765L424 762L428 765L418 775L409 775Z" fill="#80ff40" fill-opacity=".75" stroke="#80ff40" stroke-width="1"/>
 <path d="M410 757.500L428 753L441.500 747L442.500 753" fill="none" stroke="#80ff40" stroke-width="1.800"/>
</g>
</defs>
<g clip-path="url(#rc)">
<path d="M385 790L411 746H531L561 790Z" fill="url(#glow)" filter="url(#gb)"/><rect x="380" y="740" width="186" height="48" fill="url(#glowm)"/>
<rect x="445.2" y="525" width="50" height="25" fill="#030303"/>
<use href="#half"/>
<use href="#half" transform="matrix(-1 0 0 1 940.5 0)"/>
<path d="M436 459.500L440 456L446 452.500L452.300 450.200L456 452.500L461.300 455L470.300 456.500L479.300 455L484.600 452.500L488.300 450.200L494.600 452.500L500.600 456L504.600 459.500L504.600 461.500L500.600 460.800L484.600 461.200L481.100 462.500L478.100 468L476.100 476L475.100 486L465.500 486L464.500 476L462.500 468L459.500 462.500L456 461.200L440 460.800L436 461.500Z" fill="#80ff40"/>
<path d="M436.500 460.500L432.500 474L427.500 479.500M504.100 460.500L508.100 474L513.100 479.500" stroke="#80ff40" stroke-width="1.400" fill="none"/>
<!-- head -->
<path d="M449.2 403L447.2 418L446 429L447 441.5L452.3 449.5L461.3 454.5L470.3 456L479.300 454.500L488.300 449.500L493.600 441.500L494.600 429L493.400 418L491.400 403Z" fill="#030303" stroke="#aaa" stroke-width=".9"/>
<path d="M451 414.500Q453 410 470.300 411.500Q487.600 410 489.600 414.500M470.300 411.500V431M450.500 404Q460 398 470.300 402Q480.600 398 490.100 404" fill="none" stroke="#aaa" stroke-width=".8"/>
<path d="M448.200 409V425M492.400 409V425" stroke="#80ff40" stroke-width="1.600" fill="none"/>
<path d="M448.300 419.500L449.500 422L470.300 435L491.100 422L492.300 419.500" fill="none" stroke="#80ff40" stroke-width="2.800" stroke-linejoin="round"/>
<path d="M453.700 429.400L467.500 439M455 433L466 441M486.900 429.400L473.100 439M485.600 433L474.600 441" fill="none" stroke="#80ff40" stroke-width="1.500"/>
<path d="M470.300 429.500L473.300 435L470.300 441L467.300 435Z" fill="#80ff40"/>
<ellipse cx="470.300" cy="449.600" rx="9.400" ry="6.200" fill="#80ff40"/>
<path d="M463.600 445V454M466.800 443.500V455.500M473.800 443.500V455.500M477 445V454" stroke="#0a0a0a" stroke-width="1.500"/>
<path d="M470.300 443V456" stroke="#ccc" stroke-width=".7"/>
<path d="M461 446Q459 450 462 454.500M479.600 446Q481.600 450 478.600 454.500" stroke="#c4c4c4" stroke-width=".9" fill="none"/>
</g>
<g fill="#c8e9a0" fill-opacity=".84" stroke="#c8df90" stroke-width="1">
<rect x="449.900" y="368.500" width="39.900" height="39.900"/>
<rect x="449.900" y="484.700" width="39.900" height="39.900"/>
<rect x="534.900" y="520.200" width="39.900" height="39.900"/>
<rect x="364.900" y="573.300" width="39.900" height="39.900"/>
<rect x="534.900" y="573.300" width="39.900" height="39.900"/>
<rect x="534.900" y="722.700" width="39.900" height="39.900"/>
</g>
</svg>

<!--/ROBOT-->

<h2 style="left:257px;top:807px">stash</h2>

<h2 style="left:682px;top:244px">armors</h2>
<div class="ord" style="top:280px">[<a href="#">order</a>]</div>

<h2 style="left:682px;top:495px">weapons</h2>
<div class="tb" style="top:303px">
<div class="tr hd"><span style="left:0">cost</span><span style="left:66px">armor</span><span style="left:245px">slot</span><span style="left:292px">defense</span><span style="left:341px">STR</span></div>
<div class="tr" style="background:#550000"><span class="c1">24,000</span><a href="#" style="left:70px;color:#fff">Gods Pyjamas</a><span style="left:248px">body</span><span style="left:310px">333</span><span class="r" style="left:345px">100</span></div>
<div class="tr" style="background:#330000"><span class="c1">2,600</span><a href="#" style="left:70px;color:#fff">Greyform</a><span style="left:248px">body</span><span style="left:310px">30</span><span class="r" style="left:345px">35</span></div>
<div class="tr" style="background:#006600"><span class="c1">12</span><a href="#" style="left:70px">cap</a><span style="left:248px">helmet</span><span style="left:310px">4</span><span style="left:345px">0</span></div>
<div class="tr" style="background:#004400"><span class="c1">6</span><a href="#" style="left:70px">leather gloves</a><span style="left:248px">gloves</span><span style="left:310px">3</span><span style="left:345px">0</span></div>
<div class="tr" style="background:#006600"><span class="c1">6</span><a href="#" style="left:70px">boots</a><span style="left:248px">boots</span><span style="left:310px">3</span><span style="left:345px">0</span></div>
</div>
<div class="ord" style="top:531px">[<a href="#">order</a>]</div>

<h2 style="left:682px;top:746px">shields</h2>
<div class="tb" style="top:554px">
<div class="tr hd"><span style="left:0">cost</span><span style="left:66px">weapon</span><span style="left:235px">damage</span><span style="left:303px">STR</span><span style="left:341px">DEX</span></div>
<div class="tr" style="background:#006600"><span class="c1">36</span><a href="#" style="left:70px">club</a><span style="left:248px">1-6</span><span style="left:310px">0</span><span style="left:345px">0</span></div>
<div class="tr" style="background:#004400"><span class="c1">16</span><a href="#" style="left:70px">dagger</a><span style="left:248px">2-4</span><span style="left:310px">0</span><span style="left:345px">0</span></div>
<div class="tr" style="background:#006600"><span class="c1">2</span><a href="#" style="left:70px">rusty spoon</a><span style="left:248px">2-3</span><span style="left:310px">0</span><span style="left:345px">0</span></div>
<div class="tr" style="background:#004400"><span class="c1">2</span><a href="#" style="left:70px">broken bottle</a><span style="left:248px">2-3</span><span style="left:310px">0</span><span style="left:345px">0</span></div>
<div class="tr" style="background:#006600"><span class="c1">2</span><a href="#" style="left:70px">precious knife</a><span style="left:248px">2-3</span><span style="left:310px">0</span><span style="left:345px">0</span></div>
<div class="tr" style="background:#004400"><span class="c1">2</span><a href="#" style="left:70px">syzygy shiv</a><span style="left:248px">2-3</span><span style="left:310px">0</span><span style="left:345px">0</span></div>
<div class="tr" style="background:#006600"><span class="c1">4</span><a href="#" style="left:70px">crab whistler</a><span style="left:248px">2-2</span><span style="left:310px">0</span><span style="left:345px">0</span></div>
</div>
<div class="ord" style="top:782px">[<a href="#">order</a>]</div>

<div class="tb" style="top:805px">
<div class="tr hd"><span style="left:0">cost</span><span style="left:66px">shield</span><span style="left:244px">block</span><span style="left:292px">defense</span><span style="left:341px">DEX</span></div>
</div>
<div class="tb" style="left:258px;top:843px;color:#ddd">
<div class="tr"><span style="left:2px">#</span><span style="left:24px">slot</span><span style="left:71px">item</span><span style="right:2px">durability</span></div>
<div class="tr" style="background:#222"><span class="g" style="left:1px;top:1px;font-size:12px">1</span></div>
<div class="tr" style="background:#333"><span class="g" style="left:1px;top:1px;font-size:12px">2</span></div>
<div class="tr" style="background:#222"><span class="g" style="left:1px;top:1px;font-size:12px">3</span></div>
<div class="tr" style="background:#333"><span class="g" style="left:1px;top:1px;font-size:12px">4</span></div>
</div>
<div id="scroll"><svg width="15" height="895" viewBox="0 0 15 895"><path d="M2.600 11L7.500 5.500L12.400 11ZM2.500 882.700L12.400 882.700L7.500 888.400Z" fill="#a0a0a0"/></svg><div class="th"></div></div>
</body>
</html>
